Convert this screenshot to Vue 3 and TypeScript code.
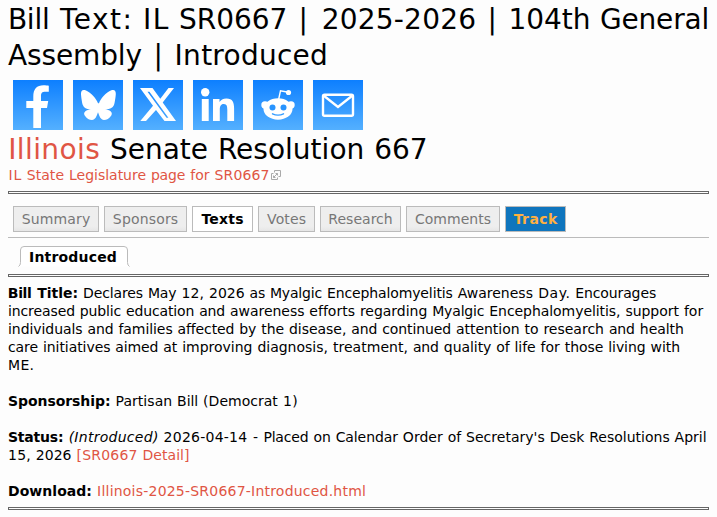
<script setup lang="ts">
import { type Directive } from 'vue'

// ─── Types ────────────────────────────────────────────────────────────────────

interface Tab {
  label: string
  width: number
  text: number
  state?: 'active' | 'track'
}

interface Run {
  text: string
  width: number
  kind?: 'label' | 'status' | 'link'
}

// ─── Data ─────────────────────────────────────────────────────────────────────

const shares = ['facebook', 'bluesky', 'x', 'linkedin', 'reddit', 'email']

const tabs: Tab[] = [
  { label: 'Summary', width: 86, text: 68.5 },
  { label: 'Sponsors', width: 83, text: 65.5 },
  { label: 'Texts', width: 61, text: 42.5, state: 'active' },
  { label: 'Votes', width: 57, text: 39 },
  { label: 'Research', width: 81, text: 64.5 },
  { label: 'Comments', width: 94, text: 76 },
  { label: 'Track', width: 61, text: 44, state: 'track' },
]

const paragraphs: Run[][][] = [
  [
    [
      { text: 'Bill Title:', width: 70, kind: 'label' },
      { text: 'Declares May 12, 2026 as Myalgic Encephalomyelitis Awareness Day. Encourages', width: 573 },
    ],
    [{ text: 'increased public education and awareness efforts regarding Myalgic Encephalomyelitis, support for', width: 695 }],
    [{ text: 'individuals and families affected by the disease, and continued attention to research and health', width: 675.5 }],
    [{ text: 'care initiatives aimed at improving diagnosis, treatment, and quality of life for those living with', width: 672 }],
    [{ text: 'ME.', width: 26 }],
  ],
  [
    [
      { text: 'Sponsorship:', width: 102.5, kind: 'label' },
      { text: 'Partisan Bill (Democrat 1)', width: 182.5 },
    ],
  ],
  [
    [
      { text: 'Status:', width: 55.5, kind: 'label' },
      { text: '(Introduced)', width: 90, kind: 'status' },
      { text: "2026-04-14 - Placed on Calendar Order of Secretary's Desk Resolutions April", width: 543 },
    ],
    [
      { text: '15, 2026', width: 63.5 },
      { text: '[SR0667 Detail]', width: 113, kind: 'link' },
    ],
  ],
  [
    [
      { text: 'Download:', width: 84, kind: 'label' },
      { text: 'Illinois-2025-SR0667-Introduced.html', width: 269, kind: 'link' },
    ],
  ],
]

// ─── Text fitting ─────────────────────────────────────────────────────────────

// Verdana advance widths in thousandths of an em.
const ADVANCES: Record<string, number> = {
  ' ': 352, "'": 269, '(': 454, ')': 454, ',': 364, '-': 454, '.': 364, ':': 454, '[': 454, ']': 454, '|': 454,
  A: 684, B: 686, C: 698, D: 771, E: 632, G: 775, I: 421, L: 557, M: 843, O: 787, P: 603, R: 695, S: 684, T: 616, V: 684,
  a: 601, b: 623, c: 521, d: 623, e: 596, f: 352, g: 623, h: 633, i: 274, j: 344, k: 592, l: 274, m: 973,
  n: 633, o: 607, p: 623, q: 623, r: 427, s: 521, t: 394, u: 633, v: 592, w: 818, x: 592, y: 592, z: 525,
}

function advance(text: string): number {
  return [...text].reduce((sum, char) => sum + (ADVANCES[char] ?? 636), 0)
}

// Gives every word its share of the wanted run width, so that word starts
// land where Verdana would put them even when DejaVu Sans is drawn.
const vFit: Directive<HTMLElement, number> = {
  mounted(el, { value }) {
    const text = el.textContent ?? ''
    const unit = value / advance(text)
    el.textContent = ''
    text.split(' ').forEach((word, index) => {
      if (index) {
        const space = document.createElement('span')
        space.textContent = ' '
        el.append(space)
        space.style.wordSpacing = `${unit * ADVANCES[' ']! - space.getBoundingClientRect().width}px`
      }
      const box = document.createElement('span')
      box.textContent = word
      el.append(box)
      const extra = (unit * advance(word) - box.getBoundingClientRect().width) / word.length
      box.style.letterSpacing = `${extra}px`
      box.style.position = 'relative'
      box.style.left = `${extra / 2}px`
    })
  },
}
</script>

<template>
  <main class="page">
    <h1 class="heading">
      <span class="title-line">
        <span v-fit="301.5" class="run">Bill Text: IL SR0667 |</span>
        <span v-fit="387.5" class="run">2025-2026 | 104th General</span>
      </span>
      <span v-fit="320" class="run">Assembly | Introduced</span>
    </h1>

    <div class="shares">
      <a v-for="name in shares" :key="name" class="share" :aria-label="name">
        <svg v-if="name === 'facebook'" viewBox="0 0 50 50">
          <path d="M20.300 48V28h-7v-7h7v-4.500C20.300 9 23.800 5.200 30.500 5.200c2 0 4 .2 5.300.5v6h-3.300c-3.600 0-4.500 1.500-4.500 4.300v5h7.200l-1.200 7h-6v20z" />
        </svg>
        <svg v-else-if="name === 'bluesky'" viewBox="0 0 50 50">
          <path d="M25 23.200C23.500 19 18 12.600 13 10.600 9.500 9.300 8 10.700 8 13.800c0 2 1 9.200 1.800 11.200 1.400 3.500 4.700 4.600 8.200 4.200-4.500.8-8.300 2.600-6.300 6.300 2 3.200 4.700 4.500 7.300 4.500 3.300 0 4.500-3.500 6-7.700 1.500 4.200 2.700 7.700 6 7.700 2.600 0 5.300-1.300 7.300-4.500 2-3.700-1.800-5.500-6.300-6.300 3.500.4 7.600-.7 9-4.200.8-2 1.800-9.200 1.800-11.200 0-3.100-1.500-4.500-5-3.200-5 2-10.300 8.400-11.800 12.600z" />
        </svg>
        <svg v-else-if="name === 'x'" viewBox="0 0 50 50">
          <path fill-rule="evenodd" d="M7 8h12.500l7.800 10.800L35.500 8H41L29.700 22.600 43 41H31.500l-8.500-11L13 41H7.300l12.700-15.200zM14.500 11.800 33.500 37.800h1.900L16.400 11.800z" />
        </svg>
        <svg v-else-if="name === 'linkedin'" viewBox="0 0 50 50">
          <circle cx="12.200" cy="12.200" r="4.200" />
          <path d="M8.800 19h6.900v22H8.800zM20 19h6.500v3c1.100-2 3.600-3.600 7-3.600 6.300 0 7.600 4 7.600 10V41h-6.800V29.800c0-3-.3-5.800-3.500-5.800s-4 2.600-4 5.700V41H20z" />
        </svg>
        <svg v-else-if="name === 'reddit'" viewBox="0 0 50 50">
          <path d="M25.500 20 27.500 10.800 34 12" fill="none" stroke="#fff" stroke-width="1.400" />
          <circle cx="35.500" cy="12.500" r="2.600" />
          <circle cx="12" cy="25" r="3.700" />
          <circle cx="38" cy="25" r="3.700" />
          <ellipse cx="25" cy="29" rx="14.500" ry="10.700" />
          <circle cx="19.500" cy="27.500" r="3" class="ink" />
          <circle cx="30.500" cy="27.500" r="3" class="ink" />
          <path class="smile" d="M19.500 33.800Q25 36.500 30.500 33.800" />
        </svg>
        <svg v-else viewBox="0 0 50 50">
          <rect x="10" y="14.800" width="30" height="21" rx="1.500" fill="none" stroke="#fff" stroke-width="2.400" />
          <path d="M10.500 15.500 25 27 39.500 15.500" fill="none" stroke="#fff" stroke-width="2.400" />
        </svg>
      </a>
    </div>

    <h2 class="heading resolution">
      <a v-fit="92" class="run link">Illinois</a>
      <span v-fit="317.5" class="run">Senate Resolution 667</span>
    </h2>
    <div class="source">
      <a v-fit="261.5" class="run link">IL State Legislature page for SR0667</a>
      <svg class="external" viewBox="0 0 10 10">
        <path d="M3.500.5h6v6h-2M3.500.5v2M2.500 3.500h-2v6h6v-2" />
        <path d="M2.500 7.500 6.500 3.500M4.500 3.500h2v2M2.500 5.500v2h2" />
      </svg>
    </div>

    <div class="rule"></div>

    <nav class="tabs">
      <a v-for="tab in tabs" :key="tab.label" class="tab" :class="tab.state" :style="{ width: `${tab.width}px` }">
        <span v-fit="tab.text" class="run">{{ tab.label }}</span>
      </a>
    </nav>

    <div class="versions">
      <svg class="outline" viewBox="0 0 112 22">
        <path d="M.5 20.500q2-1 2-4V4q0-3.500 3.500-3.500h100q3.500 0 3.500 3.500v12.500q0 3 2 4" />
      </svg>
      <a v-fit="88" class="run version">Introduced</a>
    </div>

    <div class="rule"></div>

    <section class="details">
      <div v-for="(lines, p) in paragraphs" :key="p" class="paragraph">
        <div v-for="(line, l) in lines" :key="l" class="line">
          <span v-for="run in line" :key="run.text" v-fit="run.width" class="run" :class="run.kind">{{ run.text }}</span>
        </div>
      </div>
    </section>

    <div class="rule"></div>
  </main>
</template>

<style>
body {
  background: #fdfdfd;
}
</style>

<style scoped>
.page {
  box-sizing: border-box;
  height: 517px;
  padding: 2px 8px 0;
  overflow: hidden;
  background: #fdfdfd;
  color: #000;
  font: 14px/18px Verdana, 'DejaVu Sans', sans-serif;
}

.run {
  flex: none;
  white-space: pre;
}

.link {
  color: #e05544;
}

.heading {
  display: flex;
  flex-direction: column;
  align-items: flex-start;
  margin: 0;
  font-size: 28px;
  font-weight: normal;
  line-height: 36px;
}

.title-line {
  display: flex;
  gap: 12px;
}

.shares {
  display: flex;
  gap: 10px;
  padding: 6px 5px 0;
}

.share {
  width: 50px;
  height: 50px;
  background: linear-gradient(#0d7fff, #54b0ff);
}

.share svg {
  display: block;
  width: 50px;
  height: 50px;
  fill: #fff;
}

.share .ink {
  fill: #2894ff;
}

.share .smile {
  fill: none;
  stroke: #349cff;
  stroke-width: 1.4;
  stroke-linecap: round;
}

.resolution {
  flex-direction: row;
  gap: 10px;
  margin: 2px 0 -2px;
}

.source {
  display: flex;
  align-items: center;
  gap: 1.5px;
}

.external {
  width: 10px;
  height: 10px;
  fill: none;
  stroke: #aaa;
}

.rule {
  box-sizing: border-box;
  height: 3px;
  margin-top: 7px;
  border: 1px solid #666;
}

.tabs {
  display: flex;
  gap: 5px;
  padding: 12px 5px 5px;
  border-bottom: 1px solid #bbb;
}

.tab {
  box-sizing: border-box;
  display: flex;
  justify-content: center;
  height: 26px;
  border: 1px solid #bbb;
  background: linear-gradient(#eee 80%, #e6e6e6);
  color: #777;
  line-height: 24px;
}

.tab.active {
  background: #fff;
  color: #000;
  font-weight: bold;
}

.tab.track {
  background: #0f75bd;
  color: #ffb040;
  font-weight: bold;
}

.versions {
  position: relative;
  display: flex;
  height: 19px;
  padding: 10px 0 0 21px;
}

.outline {
  position: absolute;
  top: 8px;
  left: 10px;
  width: 112px;
  height: 22px;
  fill: #fff;
  stroke: #bbb;
}

.version {
  position: relative;
  font-weight: bold;
}

.details {
  display: flex;
  flex-direction: column;
  gap: 18px;
  margin-top: 7px;
}

.line {
  display: flex;
  gap: 5px;
}

.label {
  font-weight: bold;
}

.status {
  font-style: italic;
}
</style>
